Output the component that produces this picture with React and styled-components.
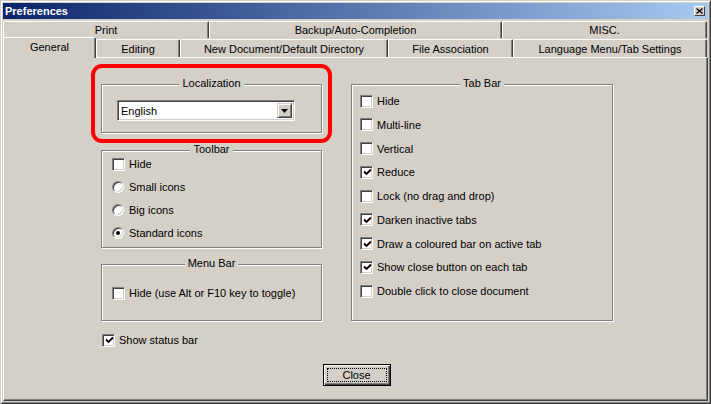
import React from "react";
import styled, { createGlobalStyle } from "styled-components";

const backTabs = [
  { label: "Print", width: 206 },
  { label: "Backup/Auto-Completion", width: 293 },
  { label: "MISC.", width: 205 },
];

const frontTabs = [
  { label: "General", width: 93, selected: true },
  { label: "Editing", width: 84 },
  { label: "New Document/Default Directory", width: 208 },
  { label: "File Association", width: 125 },
  { label: "Language Menu/Tab Settings", width: 194 },
];

const tabBarOptions = [
  { label: "Hide", checked: false },
  { label: "Multi-line", checked: false },
  { label: "Vertical", checked: false },
  { label: "Reduce", checked: true },
  { label: "Lock (no drag and drop)", checked: false },
  { label: "Darken inactive tabs", checked: true },
  { label: "Draw a coloured bar on active tab", checked: true },
  { label: "Show close button on each tab", checked: true },
  { label: "Double click to close document", checked: false },
];

const toolbarIcons = [
  { label: "Small icons", checked: false },
  { label: "Big icons", checked: false },
  { label: "Standard icons", checked: true },
];

const CheckBox = ({ checked }) => (
  <Box>
    {checked && (
      <svg width="9" height="9" viewBox="0 0 9 9">
        <path d="M1 3.5 L3.5 6 L8 1.5" fill="none" stroke="#000" strokeWidth="1.8" />
      </svg>
    )}
  </Box>
);

const Check = ({ checked, children }) => (
  <Row>
    <CheckBox checked={checked} />
    <span>{children}</span>
  </Row>
);

const Radio = ({ checked, children }) => (
  <Row>
    <RadioDot $checked={checked} />
    <span>{children}</span>
  </Row>
);

const Group = ({ title, pad, gap, top, children }) => (
  <GroupBox $top={top}>
    <Caption>{title}</Caption>
    <GroupBody $pad={pad} $gap={gap}>
      {children}
    </GroupBody>
  </GroupBox>
);

const App = () => {
  return (
    <>
      <GlobalStyle />
      <Window>
        <TitleBar>
          <span>Preferences</span>
          <TitleClose>
            <svg width="7" height="6" viewBox="0 0 7 6">
              <path d="M0.5 0.5 L6.5 5.5 M6.5 0.5 L0.5 5.5" stroke="#000" strokeWidth="1.3" />
            </svg>
          </TitleClose>
        </TitleBar>

        <TabRow>
          {backTabs.map((t) => (
            <Tab key={t.label} $width={t.width}>
              {t.label}
            </Tab>
          ))}
        </TabRow>
        <TabRow $front>
          {frontTabs.map((t) => (
            <Tab key={t.label} $width={t.width} $selected={t.selected} $front>
              {t.label}
            </Tab>
          ))}
        </TabRow>

        <Panel>
          <Columns>
            <LeftCol>
              <Highlighted>
                <Group title="Localization" pad="10px 0 11px 15px">
                  <Combo>
                    <ComboText>English</ComboText>
                    <ComboButton>
                      <svg width="7" height="4" viewBox="0 0 7 4">
                        <path d="M0 0 H7 L3.5 4 Z" fill="#000" />
                      </svg>
                    </ComboButton>
                  </Combo>
                </Group>
              </Highlighted>

              <Group title="Toolbar" pad="0 0 6px 10px" gap={7} top={17}>
                <Check>Hide</Check>
                {toolbarIcons.map((r) => (
                  <Radio key={r.label} checked={r.checked}>
                    {r.label}
                  </Radio>
                ))}
              </Group>

              <Group title="Menu Bar" pad="15px 0 19px 10px" top={16}>
                <Check>Hide (use Alt or F10 key to toggle)</Check>
              </Group>

              <StatusRow>
                <Check checked>Show status bar</Check>
              </StatusRow>
            </LeftCol>

            <Group title="Tab Bar" pad="3px 0 21px 8px" gap={7.75}>
              {tabBarOptions.map((o) => (
                <Check key={o.label} checked={o.checked}>
                  {o.label}
                </Check>
              ))}
            </Group>
          </Columns>

          <Footer>
            <CloseButton>
              <FocusRing>Close</FocusRing>
            </CloseButton>
          </Footer>
        </Panel>
      </Window>
    </>
  );
};

export default App;

const GlobalStyle = createGlobalStyle`
  html, body {
    margin: 0;
    padding: 0;
    background: #d4d0c8;
  }
  body {
    font-family: "Liberation Sans", Arial, sans-serif;
    font-size: 11px;
    color: #000;
  }
`;

const Window = styled.div`
  width: 711px;
  height: 404px;
  box-sizing: border-box;
  background: #d4d0c8;
  border: 1px solid;
  border-color: #d4d0c8 #404040 #404040 #d4d0c8;
  box-shadow: inset 1px 1px 0 #fff, inset -1px -1px 0 #808080;
  padding: 2px;
  display: flex;
  flex-direction: column;
`;

const TitleBar = styled.div`
  height: 16px;
  flex-shrink: 0;
  display: flex;
  align-items: center;
  justify-content: space-between;
  padding: 0 3px 0 2px;
  background: linear-gradient(to right, #0a246a, #a6caf0);
  color: #fff;
  font-weight: bold;
  font-size: 11px;
`;

const TitleClose = styled.div`
  width: 11px;
  height: 10px;
  box-sizing: border-box;
  background: #d4d0c8;
  border: 1px solid;
  border-color: #fff #404040 #404040 #fff;
  display: flex;
  align-items: center;
  justify-content: center;
`;

const TabRow = styled.div`
  display: flex;
  height: ${(p) => (p.$front ? "19px" : "17px")};
  margin-top: ${(p) => (p.$front ? "0" : "2px")};
  flex-shrink: 0;
`;

const Tab = styled.div`
  width: ${(p) => p.$width}px;
  box-sizing: border-box;
  flex-shrink: 0;
  display: flex;
  align-items: center;
  justify-content: center;
  background: #d4d0c8;
  border-top: 1px solid #fff;
  border-left: 1px solid #fff;
  border-right: 1px solid #404040;
  box-shadow: inset -1px 0 0 #808080;
  border-radius: 2px 2px 0 0;
  white-space: nowrap;
  margin-top: ${(p) => (p.$front && !p.$selected ? "1px" : "0")};
  ${(p) =>
    p.$selected &&
    `
    position: relative;
    z-index: 1;
    margin-top: -1px;
    height: 21px;
    padding-bottom: 2px;
  `}
`;

const Panel = styled.div`
  flex: 1;
  box-sizing: border-box;
  border: 1px solid;
  border-color: #fff #404040 #404040 #fff;
  box-shadow: inset -1px -1px 0 #808080;
  padding-top: 26px;
  display: flex;
  flex-direction: column;
`;

const Columns = styled.div`
  display: grid;
  grid-template-columns: 221px 262px;
  column-gap: 29px;
  align-items: start;
  margin-left: 97px;
`;

const LeftCol = styled.div`
  display: flex;
  flex-direction: column;
`;

const Highlighted = styled.div`
  position: relative;

  &::after {
    content: "";
    position: absolute;
    top: -20px;
    left: -10px;
    right: -10px;
    bottom: -10px;
    border: 4px solid #f00;
    border-radius: 11px;
    pointer-events: none;
    z-index: 2;
  }
`;

const GroupBox = styled.div`
  display: flex;
  flex-direction: column;
  margin-top: ${(p) => p.$top || 0}px;
  border: 1px solid #808080;
  box-shadow: 1px 1px 0 #fff, inset 1px 1px 0 #fff;
`;

const Caption = styled.div`
  align-self: center;
  margin-top: -8px;
  line-height: 13px;
  height: 13px;
  padding: 0 3px;
  background: #d4d0c8;
  white-space: nowrap;
`;

const GroupBody = styled.div`
  display: flex;
  flex-direction: column;
  gap: ${(p) => p.$gap || 0}px;
  padding: ${(p) => p.$pad};
`;

const Row = styled.div`
  display: flex;
  align-items: center;
  gap: 4px;
  height: 16px;
  white-space: nowrap;
`;

const Box = styled.div`
  width: 13px;
  height: 13px;
  box-sizing: border-box;
  flex-shrink: 0;
  background: #fff;
  border: 1px solid;
  border-color: #808080 #fff #fff #808080;
  box-shadow: inset 1px 1px 0 #404040, inset -1px -1px 0 #d4d0c8;
  display: flex;
  align-items: center;
  justify-content: center;
  padding: 1px 0 0 1px;
`;

const RadioDot = styled.div`
  width: 12px;
  height: 12px;
  box-sizing: border-box;
  flex-shrink: 0;
  border-radius: 50%;
  background: #fff;
  border: 1px solid;
  border-color: #808080 #fff #fff #808080;
  box-shadow: inset 1px 1px 0 #404040, inset -1px -1px 0 #d4d0c8;
  display: flex;
  align-items: center;
  justify-content: center;
  margin-right: 1px;

  &::after {
    content: "";
    width: 4px;
    height: 4px;
    border-radius: 50%;
    background: ${(p) => (p.$checked ? "#000" : "transparent")};
  }
`;

const Combo = styled.div`
  width: 178px;
  height: 21px;
  box-sizing: border-box;
  display: flex;
  align-items: stretch;
  background: #fff;
  border: 1px solid;
  border-color: #808080 #fff #fff #808080;
  box-shadow: inset 1px 1px 0 #404040, inset -1px -1px 0 #d4d0c8;
  padding: 2px;
`;

const ComboText = styled.div`
  flex: 1;
  display: flex;
  align-items: center;
  padding-left: 1px;
`;

const ComboButton = styled.div`
  width: 15px;
  box-sizing: border-box;
  background: #d4d0c8;
  border: 1px solid;
  border-color: #d4d0c8 #404040 #404040 #d4d0c8;
  box-shadow: inset 1px 1px 0 #fff, inset -1px -1px 0 #808080;
  display: flex;
  align-items: center;
  justify-content: center;
`;

const StatusRow = styled.div`
  margin-top: 11px;
  margin-left: 1px;
`;

const Footer = styled.div`
  display: flex;
  justify-content: center;
  margin-top: 16px;
  padding-left: 2px;
`;

const CloseButton = styled.button`
  width: 68px;
  height: 22px;
  box-sizing: border-box;
  padding: 3px;
  background: #d4d0c8;
  border: 1px solid #000;
  box-shadow: inset 1px 1px 0 #fff, inset -1px -1px 0 #404040,
    inset -2px -2px 0 #808080;
  font-family: "Liberation Sans", Arial, sans-serif;
  font-size: 11px;
  color: #000;
  display: flex;
`;

const FocusRing = styled.span`
  flex: 1;
  display: flex;
  align-items: center;
  justify-content: center;
  border: 1px dotted #000;
`;
